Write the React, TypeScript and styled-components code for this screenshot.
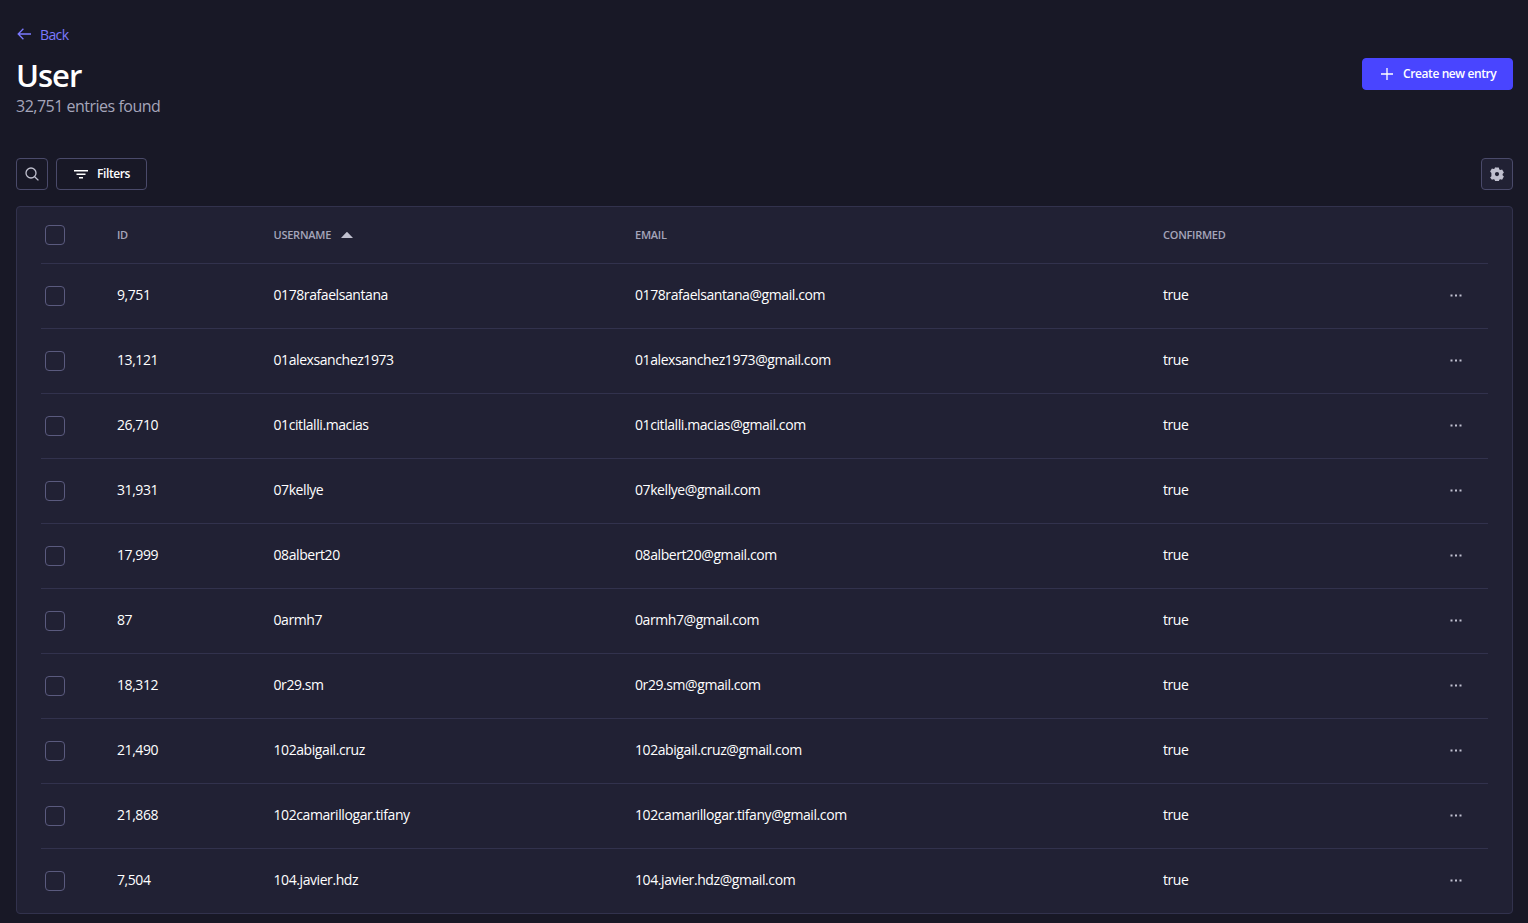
import React from "react";
import styled, { createGlobalStyle } from "styled-components";

const Global = createGlobalStyle`
  html, body { margin: 0; padding: 0; background: #181826; height: 923px; overflow: hidden; }
  body { font-family: "Open Sans", "Noto Sans", "Liberation Sans", sans-serif; }
`;

const Page = styled.div`
  box-sizing: border-box;
  height: 923px;
  padding: 24px 15px 0 16px;
  background: #181826;
  display: flex;
  flex-direction: column;
`;

const BackLink = styled.a`
  display: flex;
  align-items: center;
  gap: 9px;
  height: 20px;
  padding-left: 1px;
  color: #7b79ff;
  font-size: 14px;
  letter-spacing: -0.6px;
  svg { display: block; }
`;

const HeaderRow = styled.div`
  display: flex;
  justify-content: space-between;
  align-items: flex-start;
  margin-top: 14px;
  height: 60px;
`;

const TitleBlock = styled.div`
  display: flex;
  flex-direction: column;
`;

const Title = styled.h1`
  margin: -1px 0 1px;
  height: 36px;
  line-height: 36px;
  color: #ffffff;
  font-size: 31px;
  font-weight: 600;
  letter-spacing: -1px;
`;

const Subtitle = styled.div`
  height: 24px;
  line-height: 24px;
  color: #a5a5ba;
  font-size: 16px;
  letter-spacing: -0.5px;
`;

const PrimaryButton = styled.button`
  display: flex;
  align-items: center;
  gap: 10px;
  box-sizing: border-box;
  width: 151px;
  height: 32px;
  padding: 0 0 2px 18px;
  border: 1px solid #4945ff;
  border-radius: 4px;
  background: #4945ff;
  color: #ffffff;
  font-family: inherit;
  font-size: 12px;
  font-weight: 600;
  letter-spacing: -0.4px;
  white-space: nowrap;
  svg { display: block; margin-top: 2px; }
`;

const Toolbar = styled.div`
  display: flex;
  align-items: center;
  justify-content: space-between;
  margin-top: 40px;
  height: 32px;
`;

const ToolGroup = styled.div`
  display: flex;
  gap: 8px;
`;

const IconButton = styled.button<{ $filled?: boolean }>`
  display: flex;
  align-items: center;
  justify-content: center;
  box-sizing: border-box;
  width: 32px;
  height: 32px;
  padding: 0;
  border: 1px solid #4a4a6a;
  border-radius: 4px;
  background: ${(p) => (p.$filled ? "#212134" : "transparent")};
`;

const FilterButton = styled.button`
  display: flex;
  align-items: center;
  gap: 9px;
  box-sizing: border-box;
  width: 91px;
  height: 32px;
  padding: 0 0 2px 17px;
  border: 1px solid #4a4a6a;
  border-radius: 4px;
  background: transparent;
  color: #ffffff;
  font-family: inherit;
  font-size: 12px;
  font-weight: 600;
  letter-spacing: -0.4px;
  svg { display: block; margin-top: 2px; }
`;

const Panel = styled.div`
  box-sizing: border-box;
  margin-top: 16px;
  height: 708px;
  padding: 0 24px;
  border: 1px solid #32324d;
  border-radius: 4px;
  background: #212134;
`;

const Row = styled.div<{ $head?: boolean }>`
  display: grid;
  grid-template-columns: 76px 156.5px 361.5px 528px 287px 1fr;
  align-items: center;
  height: ${(p) => (p.$head ? "56px" : "65px")};
  box-sizing: border-box;
  border-top: ${(p) => (p.$head ? "none" : "1px solid #32324d")};
`;

const CheckCell = styled.div`
  padding-left: 4px;
  display: flex;
`;

const Checkbox = styled.span`
  display: block;
  box-sizing: border-box;
  width: 20px;
  height: 20px;
  border: 1px solid #5a5a7e;
  border-radius: 4px;
  background: #212134;
`;

const HeadCell = styled.div`
  display: flex;
  align-items: center;
  gap: 10px;
  margin-top: -1px;
  color: #a5a5ba;
  font-size: 11px;
  font-weight: 600;
  letter-spacing: -0.25px;
  text-transform: uppercase;
`;

const Cell = styled.div`
  padding-bottom: 3px;
  color: #ffffff;
  font-size: 14px;
  letter-spacing: -0.42px;
  white-space: nowrap;
`;

const ActionCell = styled.div`
  display: flex;
  padding-bottom: 2px;
  svg { display: block; }
`;

const Back = () => (
  <svg width="14" height="14" viewBox="0 0 14 14" fill="none" stroke="#7b79ff" strokeWidth="1.3">
    <path d="M14 7H1.2M6.4 1.8 1.2 7l5.2 5.2" />
  </svg>
);

const Plus = () => (
  <svg width="12" height="12" viewBox="0 0 12 12" fill="none" stroke="#ffffff" strokeWidth="1.3">
    <path d="M6 0v12M0 6h12" />
  </svg>
);

const Search = () => (
  <svg width="14" height="14" viewBox="0 0 14 14" fill="none" stroke="#c0c0cf" strokeWidth="1.3">
    <circle cx="6" cy="6" r="5" />
    <path d="M9.7 9.7 13.4 13.4" />
  </svg>
);

const FilterIcon = () => (
  <svg width="14" height="9" viewBox="0 0 14 9" fill="#ffffff">
    <rect x="0" y="0" width="14" height="1.5" />
    <rect x="2.5" y="3.5" width="9" height="1.5" />
    <rect x="5" y="7" width="4" height="1.5" />
  </svg>
);

const Gear = () => (
  <svg width="14" height="14" viewBox="0 0 14 14" fill="#c0c0cf" fillRule="evenodd">
    <path d="M5.2.6h3.6l.5 1.8 1 .6 1.8-.5 1.8 3.1-1.3 1.4v1.2l1.3 1.4-1.8 3.1-1.8-.5-1 .6-.5 1.8H5.2l-.5-1.8-1-.6-1.8.5L.1 10.6l1.3-1.4V6L.1 4.6l1.8-3.1 1.8.5 1-.6.5-1.8ZM7 5a2.1 2.1 0 1 0 0 4.2A2.1 2.1 0 0 0 7 5Z" />
  </svg>
);

const Caret = () => (
  <svg width="12" height="6" viewBox="0 0 12 6" fill="#c0c0cf">
    <path d="M0 6 5.2.4a1 1 0 0 1 1.5 0L12 6H0Z" />
  </svg>
);

const Dots = () => (
  <svg width="12" height="3" viewBox="0 0 12 3" fill="#c0c0cf">
    <rect x="0.5" y="0.5" width="2" height="2" />
    <rect x="5" y="0.5" width="2" height="2" />
    <rect x="9.5" y="0.5" width="2" height="2" />
  </svg>
);

const entries = [
  ["9,751", "0178rafaelsantana"],
  ["13,121", "01alexsanchez1973"],
  ["26,710", "01citlalli.macias"],
  ["31,931", "07kellye"],
  ["17,999", "08albert20"],
  ["87", "0armh7"],
  ["18,312", "0r29.sm"],
  ["21,490", "102abigail.cruz"],
  ["21,868", "102camarillogar.tifany"],
  ["7,504", "104.javier.hdz"],
];

export default function App() {
  return (
    <Page>
      <Global />
      <BackLink>
        <Back />
        Back
      </BackLink>
      <HeaderRow>
        <TitleBlock>
          <Title>User</Title>
          <Subtitle>32,751 entries found</Subtitle>
        </TitleBlock>
        <PrimaryButton>
          <Plus />
          Create new entry
        </PrimaryButton>
      </HeaderRow>
      <Toolbar>
        <ToolGroup>
          <IconButton><Search /></IconButton>
          <FilterButton>
            <FilterIcon />
            Filters
          </FilterButton>
        </ToolGroup>
        <IconButton $filled><Gear /></IconButton>
      </Toolbar>
      <Panel>
        <Row $head>
          <CheckCell><Checkbox /></CheckCell>
          <HeadCell>ID</HeadCell>
          <HeadCell>Username <Caret /></HeadCell>
          <HeadCell>Email</HeadCell>
          <HeadCell>Confirmed</HeadCell>
        </Row>
        {entries.map(([id, name]) => (
          <Row key={id}>
            <CheckCell><Checkbox /></CheckCell>
            <Cell>{id}</Cell>
            <Cell>{name}</Cell>
            <Cell>{name}@gmail.com</Cell>
            <Cell>true</Cell>
            <ActionCell><Dots /></ActionCell>
          </Row>
        ))}
      </Panel>
    </Page>
  );
}
